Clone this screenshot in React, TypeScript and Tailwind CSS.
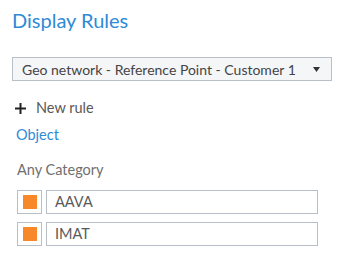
const categories = ["AAVA", "IMAT"];

function CategoryRow({ label }: { label: string }) {
  return (
    <div className="flex items-center gap-1">
      <div className="flex h-6 w-[25px] items-center justify-center border border-[#b8bfc9] bg-white">
        <div className="h-[14px] w-[14px] bg-[#f7892b]" />
      </div>
      <div className="flex h-6 w-[272px] items-center border border-[#b8bfc9] bg-white px-2 text-[14.5px] text-[#5a5a5a]">
        {label}
      </div>
    </div>
  );
}

export default function App() {
  return (
    <div className="h-[256px] w-[341px] bg-white px-3 font-['Lato','Liberation_Sans',sans-serif]">
      <h1 className="pt-[8px] text-[20px] leading-6 text-[#2f8ad6]">Display Rules</h1>

      <div className="mt-[25px] flex h-6 w-[320px] items-center justify-between border border-[#b8bfc9] bg-[#f5f6f8] pl-[9px] pr-[11px] text-[14px] text-[#444]">
        <span>Geo network - Reference Point - Customer 1</span>
        <svg width="7" height="5" viewBox="0 0 7 5">
          <path d="M0 0h7L3.5 5z" fill="#333" />
        </svg>
      </div>

      <div className="mt-[17px] flex items-center gap-[10px] pl-[3px] text-[14.5px] leading-5 text-[#595959]">
        <svg width="11" height="11" viewBox="0 0 11 11">
          <path d="M4.5 0h2v11h-2zM0 4.5h11v2H0z" fill="#222" />
        </svg>
        <span>New rule</span>
      </div>

      <div className="mt-[7px] pl-1 text-[14.5px] leading-5 text-[#2f8ad6]">Object</div>

      <div className="mt-[15px] pl-[5px] text-[14.5px] leading-5 text-[#707070]">Any Category</div>

      <div className="mt-[10px] flex flex-col gap-2 pl-[5px]">
        {categories.map((c) => (
          <CategoryRow key={c} label={c} />
        ))}
      </div>
    </div>
  );
}
